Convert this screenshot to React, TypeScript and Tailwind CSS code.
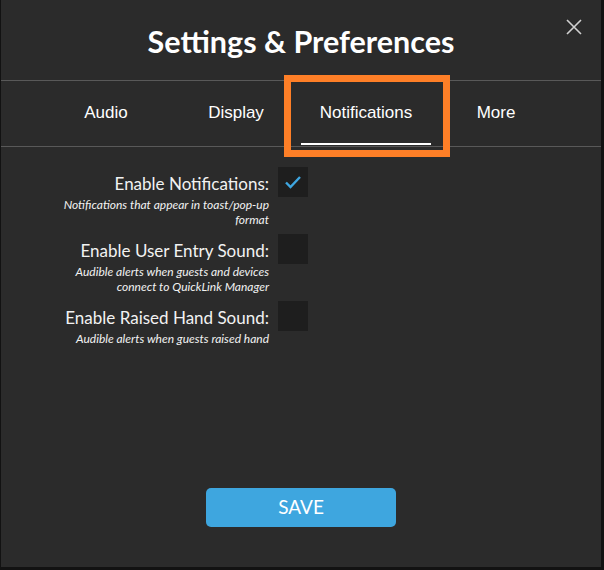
import React, { useState } from "react";

const tabs = ["Audio", "Display", "Notifications", "More"];

const rows = [
  {
    label: "Enable Notifications:",
    desc: ["Notifications that appear in toast/pop-up", "format"],
    checked: true,
  },
  {
    label: "Enable User Entry Sound:",
    desc: ["Audible alerts when guests and devices", "connect to QuickLink Manager"],
    checked: false,
  },
  {
    label: "Enable Raised Hand Sound:",
    desc: ["Audible alerts when guests raised hand"],
    checked: false,
  },
];

const CheckBox = ({ checked, onClick }) => (
  <button
    onClick={onClick}
    className="w-[30px] h-[30px] bg-[#1e1e1e] flex items-center justify-center shrink-0"
  >
    {checked && (
      <svg width="18" height="14" viewBox="0 0 18 14" fill="none">
        <path d="M2 7.5l4.5 4.5L16 2" stroke="#3ea6e0" strokeWidth="2.4" />
      </svg>
    )}
  </button>
);

export default function App() {
  const [active] = useState("Notifications");
  const [checks, setChecks] = useState(rows.map((r) => r.checked));

  return (
    <div className="relative w-[604px] h-[570px] bg-[#121212]">
      <div className="relative ml-[1px] w-[600px] h-[567px] bg-[#2b2b2b] flex flex-col">
        <div className="h-[81px] flex items-center justify-center pt-[4px] border-b border-[#595959]">
          <h1 className="font-['Lato',sans-serif] font-bold text-[30.5px] text-white">
            Settings &amp; Preferences
          </h1>
        </div>
        <button className="absolute top-[19px] right-[19px] w-[16px] h-[16px]">
          <svg width="16" height="16" viewBox="0 0 16 16" fill="none">
            <path d="M1 1l14 14M15 1L1 15" stroke="#d0d0d0" strokeWidth="1.6" />
          </svg>
        </button>

        <div className="h-[66px] flex justify-center border-b border-[#595959]">
          {tabs.map((t) => (
            <div
              key={t}
              className="w-[130px] flex flex-col items-center font-['Liberation_Sans',Arial,sans-serif] text-[17px] text-white"
            >
              <span className="mt-[22px] leading-[19px]">{t}</span>
              {active === t && <div className="mt-auto mb-[1px] w-full h-[2px] bg-white" />}
            </div>
          ))}
        </div>

        <div className="pt-[20px] flex flex-col gap-[7px]">
          {rows.map((r, i) => (
            <div key={r.label} className="flex ml-[52px] gap-[9px]">
              <div className="w-[216px] text-right font-['Lato',sans-serif] text-[#f2f2f2]">
                <div className="text-[17px] leading-[30px] pt-[2px] h-[30px]">{r.label}</div>
                <div className="italic text-[12px] leading-[15px]">
                  {r.desc.map((d) => (
                    <div key={d}>{d}</div>
                  ))}
                </div>
              </div>
              <CheckBox
                checked={checks[i]}
                onClick={() => setChecks(checks.map((c, j) => (j === i ? !c : c)))}
              />
            </div>
          ))}
        </div>

        <div className="mt-auto pb-[40px] flex justify-center">
          <button className="w-[190px] h-[39px] rounded-[5px] bg-[#3ea6df] text-white font-['Lato',sans-serif] text-[19px]">
            SAVE
          </button>
        </div>
      </div>

      <div className="absolute left-[284px] top-[75px] w-[166px] h-[82px] border-[7px] border-[#fe7f27] pointer-events-none" />
    </div>
  );
}
